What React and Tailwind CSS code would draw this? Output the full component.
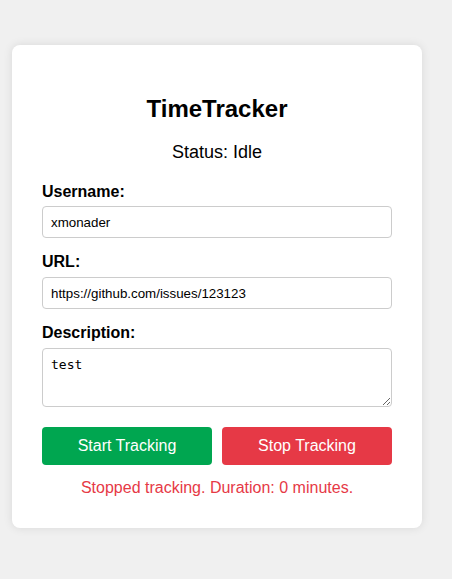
export default function App() {
  return (
    <div className="min-h-[579px] bg-[#f0f0f0] pt-[45px] font-['Liberation_Sans',Arial,sans-serif] text-black">
      <div className="ml-[12px] w-[410px] rounded-[8px] bg-white px-[30px] pt-[50px] pb-[31px] shadow-[0_0_10px_rgba(0,0,0,0.1)]">
        <h1 className="text-center text-[24px] font-bold leading-[28px]">TimeTracker</h1>
        <p className="mt-[19px] text-center text-[18px] leading-[21px]">Status: Idle</p>

        <div className="mt-[20px] flex flex-col">
          <label className="text-[16px] font-bold leading-[18px]">Username:</label>
          <input
            defaultValue="xmonader"
            className="mt-[5px] h-[32px] rounded-[4px] border border-[#ccc] px-[8px] text-[13.33px] outline-none"
          />

          <label className="mt-[15px] text-[16px] font-bold leading-[18px]">URL:</label>
          <input
            defaultValue="https://github.com/issues/123123"
            className="mt-[6px] h-[32px] rounded-[4px] border border-[#ccc] px-[8px] text-[13.33px] outline-none"
          />

          <label className="mt-[15px] text-[16px] font-bold leading-[18px]">Description:</label>
          <textarea
            defaultValue="test"
            className="mt-[6px] h-[59px] rounded-[4px] border border-[#ccc] p-[8px] font-['DejaVu_Sans_Mono',monospace] text-[13px] leading-[15px] outline-none"
          />
        </div>

        <div className="mt-[20px] grid grid-cols-2 gap-[10px]">
          <button className="h-[38px] rounded-[4px] bg-[#00a650] text-[16px] text-white">Start Tracking</button>
          <button className="h-[38px] rounded-[4px] bg-[#e63946] text-[16px] text-white">Stop Tracking</button>
        </div>

        <p className="mt-[14px] text-center text-[16px] leading-[18px] text-[#e63946]">
          Stopped tracking. Duration: 0 minutes.
        </p>
      </div>
    </div>
  );
}
